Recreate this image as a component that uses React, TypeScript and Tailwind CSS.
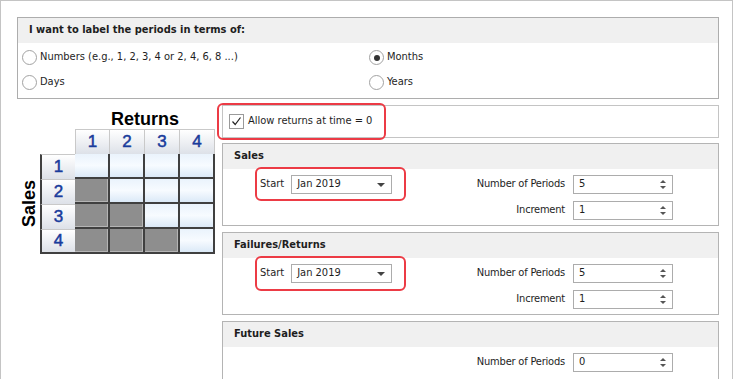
const ui = "font-['DejaVu_Sans_Condensed','Liberation_Sans',sans-serif]";

function Radio({ checked, label }: { checked?: boolean; label: string }) {
  return (
    <div className="flex h-[25px] items-center">
      <span className="flex h-[15px] w-[15px] items-center justify-center rounded-full border border-[#a2a2a2] bg-white">
        {checked && <span className="h-[6px] w-[6px] rounded-full bg-[#333]" />}
      </span>
      <span className="ml-[3px]">{label}</span>
    </div>
  );
}

function Spin({ value }: { value: string }) {
  return (
    <div className="flex h-[19px] w-[100px] items-center justify-between border border-[#acacac] bg-white pl-[5px] pr-[6px]">
      <span>{value}</span>
      <span className="flex flex-col gap-[3px]">
        <span className="h-0 w-0 border-x-[3px] border-b-[3px] border-x-transparent border-b-[#555]" />
        <span className="h-0 w-0 border-x-[3px] border-t-[3px] border-x-transparent border-t-[#555]" />
      </span>
    </div>
  );
}

function Combo({ value }: { value: string }) {
  return (
    <div className="flex h-[19px] w-[101px] items-center justify-between border border-[#acacac] bg-white pl-[5px] pr-[6px]">
      <span>{value}</span>
      <span className="h-0 w-0 border-x-[4px] border-t-[4px] border-x-transparent border-t-[#444]" />
    </div>
  );
}

function Panel({
  title,
  start,
  periods,
  increment,
  tall = true,
}: {
  title: string;
  start?: string;
  periods: string;
  increment?: string;
  tall?: boolean;
}) {
  return (
    <div className={`border border-[#b4b4b4] ${tall ? "h-[83px]" : "h-[70px]"}`}>
      <div className="flex h-[25px] items-center bg-[#f0f0f0] pl-[11px] font-bold">{title}</div>
      <div className="flex justify-between pt-[6px] pr-[45px]">
        <div className="flex h-[19px] items-center pl-[37px]">
          {start && (
            <>
              <span className="mr-[7px]">Start</span>
              <Combo value={start} />
            </>
          )}
        </div>
        <div className="grid grid-cols-[auto_100px] items-center gap-x-[8px] gap-y-[7px]">
          <span className="text-right tracking-[-0.2px]">Number of Periods</span>
          <Spin value={periods} />
          {increment && (
            <>
              <span className="text-right tracking-[-0.2px]">Increment</span>
              <Spin value={increment} />
            </>
          )}
        </div>
      </div>
    </div>
  );
}

const hdr =
  "flex items-center justify-center bg-linear-to-b from-white to-[#dde1e8] text-[17px] text-[#1a3c9c] [-webkit-text-stroke:0.5px_#1a3c9c]";

function DataCell({ shaded }: { shaded: boolean }) {
  return (
    <div
      className={`h-[25px] w-[35px] border-r-2 border-b-2 border-[#404040] ${
        shaded
          ? "bg-[#8e8e8e] shadow-[inset_-1px_-1px_0_#b5b5b5]"
          : "bg-linear-to-b from-[#eaf3fc] via-[#f7fbff] to-[#dbe9f7]"
      }`}
    />
  );
}

function Matrix() {
  const nums = [1, 2, 3, 4];
  return (
    <div className="w-[205px] pt-[5px] font-['Liberation_Sans',Arial,sans-serif]">
      <div className="ml-[58px] h-[18px] w-[140px] text-center text-[18px] font-bold leading-[18px] text-black">
        Returns
      </div>
      <div className="mt-[1px] flex">
        <div className="flex w-[23px] flex-col">
          <div className="h-[25px]" />
          <div className="flex flex-1 items-center justify-center">
            <span className="rotate-180 text-[18px] font-bold leading-[18px] text-black [writing-mode:vertical-rl]">
              Sales
            </span>
          </div>
        </div>
        <div>
          <div className="flex">
            <div className="h-[25px] w-[35px]" />
            {nums.map((n) => (
              <div
                key={n}
                className={`${hdr} h-[25px] w-[35px] border-t border-r border-[#c9c9c9] ${n === 1 ? "border-l" : ""}`}
              >
                {n}
              </div>
            ))}
          </div>
          {nums.map((r) => (
            <div key={r} className="flex">
              <div
                className={`${hdr} h-[25px] w-[35px] border-l-2 border-l-[#404040] border-t border-t-[#c9c9c9] ${
                  r === 4 ? "border-b-2 border-b-[#404040]" : ""
                }`}
              >
                {r}
              </div>
              {nums.map((c) => (
                <DataCell key={c} shaded={c < r} />
              ))}
            </div>
          ))}
        </div>
      </div>
    </div>
  );
}

export default function App() {
  return (
    <div className={`relative h-[379px] w-[736px] overflow-hidden bg-white text-[11px] text-[#1e1e1e] ${ui}`}>
      <div className="h-[379px] w-[733px] border-t border-r border-l border-[#c4c4c4] pt-[16px] pl-[16px]">
        <div className="w-[702px] border border-[#adadad]">
          <div className="flex h-[25px] items-center bg-[#f0f0f0] pl-[11px] font-bold">
            I want to label the periods in terms of:
          </div>
          <div className="grid grid-cols-[347px_1fr] pt-[2px] pb-[3px] pl-[4px]">
            <Radio label="Numbers (e.g., 1, 2, 3, 4 or 2, 4, 6, 8 ...)" />
            <Radio checked label="Months" />
            <Radio label="Days" />
            <Radio label="Years" />
          </div>
        </div>

        <div className="mt-[6px] flex">
          <Matrix />
          <div className="w-[497px]">
            <div className="flex h-[33px] items-center border border-[#c4c4c4] pl-[6px]">
              <span className="flex h-[15px] w-[15px] items-center justify-center border border-[#9a9a9a] bg-white">
                <svg width="11" height="11" viewBox="0 0 11 11">
                  <path d="M1.5 5.5 L4.2 8.5 L9.5 1.5" fill="none" stroke="#222" strokeWidth="1.2" />
                </svg>
              </span>
              <span className="ml-[4px]">Allow returns at time = 0</span>
            </div>
            <div className="mt-[5px] flex flex-col gap-[6px]">
              <Panel title="Sales" start="Jan 2019" periods="5" increment="1" />
              <Panel title="Failures/Returns" start="Jan 2019" periods="5" increment="1" />
              <Panel title="Future Sales" periods="0" tall={false} />
            </div>
          </div>
        </div>
      </div>

      <div className="absolute top-[103px] left-[217px] h-[37px] w-[169px] rounded-[6px] border-2 border-[#ec3b45]" />
      <div className="absolute top-[167px] left-[255px] h-[34px] w-[151px] rounded-[6px] border-2 border-[#ec3b45]" />
      <div className="absolute top-[256px] left-[255px] h-[35px] w-[151px] rounded-[6px] border-2 border-[#ec3b45]" />
    </div>
  );
}
